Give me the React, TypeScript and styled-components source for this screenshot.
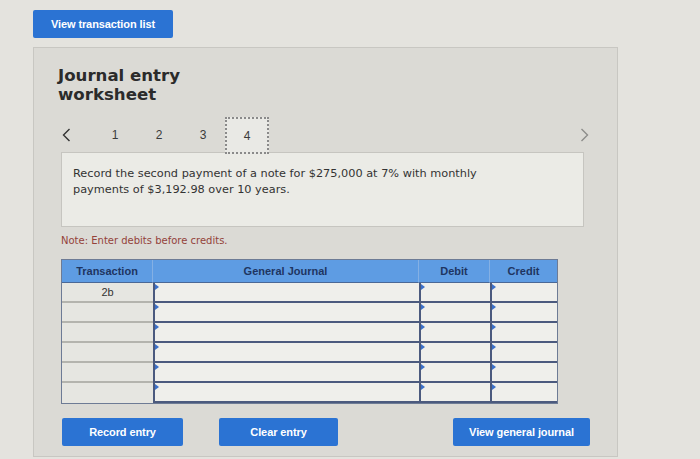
import React from "react"
import styled, { createGlobalStyle } from "styled-components"

const GlobalStyle = createGlobalStyle`
  html, body {
    margin: 0;
    padding: 0;
    background: #e4e3de;
  }
  body {
    font-family: "DejaVu Sans", Verdana, sans-serif;
    color: #333;
  }
`

const Page = styled.div`
  width: 700px;
  height: 459px;
  box-sizing: border-box;
  padding: 10px 0 0 33px;
  overflow: hidden;
  border-left: 3px solid #d2d1cc;
  margin-left: -3px;
`

const BlueButton = styled.button<{ $width: number }>`
  width: ${(p) => p.$width}px;
  height: 28px;
  padding: 0;
  border: 0;
  border-radius: 2px;
  background: #2b73d3;
  color: #fff;
  font-family: "Liberation Sans", Arial, sans-serif;
  font-weight: 700;
  font-size: 11px;
  letter-spacing: -0.1px;
  cursor: pointer;
`

const Panel = styled.section`
  width: 585px;
  height: 410px;
  margin-top: 9px;
  box-sizing: border-box;
  padding: 18px 25px 0 24px;
  background: #dbdad5;
  border: 1px solid #c8c7c2;
  display: flex;
  flex-direction: column;
`

const Title = styled.h1`
  margin: 0;
  font-family: "DejaVu Sans", Verdana, sans-serif;
  font-weight: 700;
  font-size: 16.6px;
  line-height: 19px;
  color: #2b2b2b;
`

const Nav = styled.div`
  display: flex;
  align-items: center;
  height: 35px;
  margin-top: 13px;
`

const Chevron = styled.span<{ $muted?: boolean; $end?: boolean }>`
  display: flex;
  align-items: center;
  width: ${(p) => (p.$end ? "12px" : "35px")};
  margin-left: ${(p) => (p.$end ? "auto" : "0")};
  padding-left: ${(p) => (p.$end ? "0" : "4px")};
  box-sizing: border-box;
  color: ${(p) => (p.$muted ? "#8d8d8a" : "#333")};
`

const Step = styled.span<{ $active?: boolean }>`
  width: 44px;
  height: ${(p) => (p.$active ? "37px" : "35px")};
  box-sizing: border-box;
  display: flex;
  align-items: center;
  justify-content: center;
  font-family: "Liberation Sans", Arial, sans-serif;
  font-size: 12px;
  color: #3a3a3a;
  border: ${(p) => (p.$active ? "2px dotted #8a8a8a" : "0")};
  background: ${(p) => (p.$active ? "#e9e9e5" : "transparent")};
  align-self: flex-start;
  position: relative;
  z-index: 1;
`

const Description = styled.div`
  margin-left: 3px;
  width: 523px;
  height: 75px;
  box-sizing: border-box;
  padding: 13px 11px 0;
  background: #ebebe6;
  border: 1px solid #c6c5c0;
  font-size: 11.3px;
  line-height: 16px;
  color: #333;
`

const DescText = styled.p`
  margin: 0;
  max-width: 440px;
`

const Note = styled.div`
  margin: 8px 0 0 3px;
  font-size: 10px;
  line-height: 12px;
  color: #94423a;
`

const Grid = styled.div`
  margin: 12px 0 0 3px;
  width: 497px;
  display: grid;
  grid-template-columns: 91px 266px 71px 67px;
  border: 1px solid #6d7b95;
  box-sizing: border-box;
`

const HeadCell = styled.div<{ $last?: boolean }>`
  height: 22px;
  display: flex;
  align-items: center;
  justify-content: center;
  background: #5e9ce3;
  border-right: ${(p) => (p.$last ? "0" : "1px solid #84b0e4")};
  border-bottom: 1px solid #4a6896;
  font-family: "Liberation Sans", Arial, sans-serif;
  font-weight: 700;
  font-size: 11px;
  color: #1e3561;
`

const TxCell = styled.div`
  height: 20px;
  box-sizing: border-box;
  display: flex;
  align-items: center;
  justify-content: center;
  background: #e6e6e1;
  border-bottom: 2px solid #b4b4ae;
  font-family: "Liberation Sans", Arial, sans-serif;
  font-size: 11px;
  color: #333;
  &:nth-last-child(4) {
    border-bottom: 0;
  }
`

const InputCell = styled.div`
  position: relative;
  height: 20px;
  box-sizing: border-box;
  background: #efefeb;
  border-left: 2px solid #4b5a7e;
  border-bottom: 2px solid #4b5a7e;
  &::before {
    content: "";
    position: absolute;
    left: 0;
    top: 1px;
    border-top: 3px solid transparent;
    border-bottom: 3px solid transparent;
    border-left: 4px solid #3c70c8;
  }
`

const Actions = styled.div`
  display: flex;
  margin: 14px 2px 0 4px;
`

const Spacer = styled.div<{ $w?: number }>`
  ${(p) => (p.$w ? `width: ${p.$w}px;` : "flex: 1;")}
`

const ChevronIcon = ({ dir }: { dir: "left" | "right" }) => (
  <svg width="9" height="14" viewBox="0 0 9 14" fill="none">
    <polyline
      points={dir === "left" ? "7.5,1 1.5,7 7.5,13" : "1.5,1 7.5,7 1.5,13"}
      stroke="currentColor"
      strokeWidth="1.4"
    />
  </svg>
)

const rows = ["2b", "", "", "", "", ""]

export default function App() {
  return (
    <>
      <GlobalStyle />
      <Page>
        <BlueButton $width={140}>View transaction list</BlueButton>
        <Panel>
          <Title>
            Journal entry
            <br />
            worksheet
          </Title>
          <Nav>
            <Chevron>
              <ChevronIcon dir="left" />
            </Chevron>
            <Step>1</Step>
            <Step>2</Step>
            <Step>3</Step>
            <Step $active>4</Step>
            <Chevron $end $muted>
              <ChevronIcon dir="right" />
            </Chevron>
          </Nav>
          <Description>
            <DescText>
              Record the second payment of a note for $275,000 at 7% with monthly
              payments of $3,192.98 over 10 years.
            </DescText>
          </Description>
          <Note>Note: Enter debits before credits.</Note>
          <Grid>
            <HeadCell>Transaction</HeadCell>
            <HeadCell>General Journal</HeadCell>
            <HeadCell>Debit</HeadCell>
            <HeadCell $last>Credit</HeadCell>
            {rows.map((tx, i) => (
              <React.Fragment key={i}>
                <TxCell>{tx}</TxCell>
                <InputCell />
                <InputCell />
                <InputCell />
              </React.Fragment>
            ))}
          </Grid>
          <Actions>
            <BlueButton $width={121}>Record entry</BlueButton>
            <Spacer $w={36} />
            <BlueButton $width={119}>Clear entry</BlueButton>
            <Spacer />
            <BlueButton $width={137}>View general journal</BlueButton>
          </Actions>
        </Panel>
      </Page>
    </>
  )
}
